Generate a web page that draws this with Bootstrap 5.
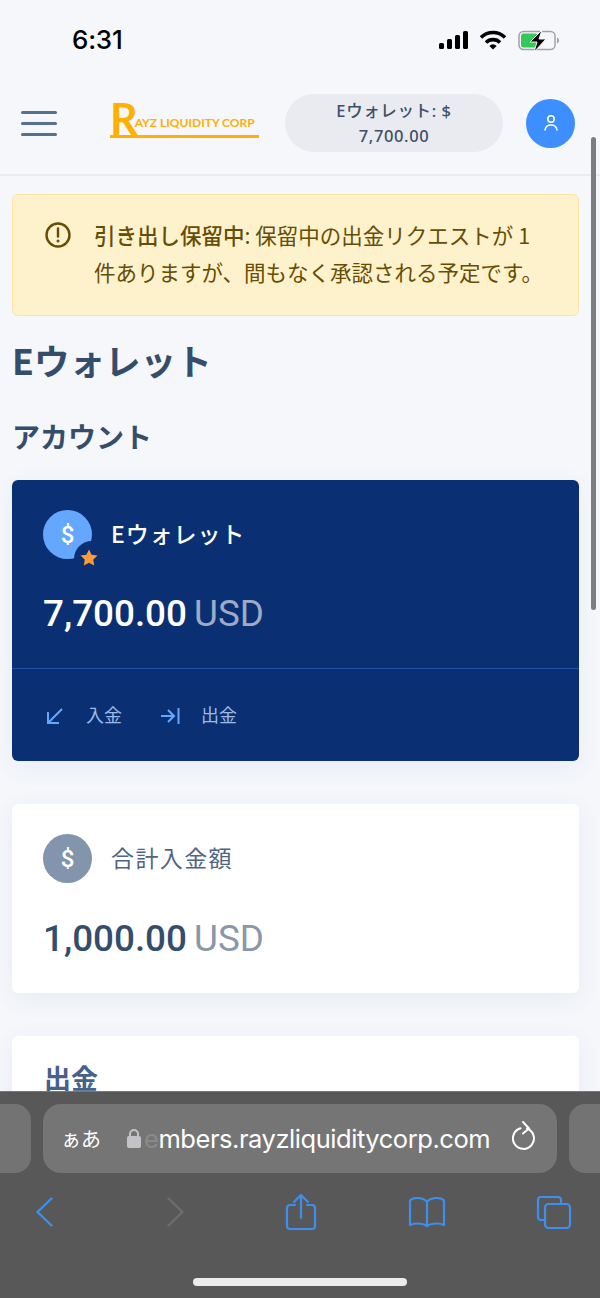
<!DOCTYPE html>
<html lang="ja">
<head>
  <meta charset="UTF-8">
  <meta name="viewport" content="width=device-width, initial-scale=1.0">
  <title>Eウォレット</title>
  <link href="https://cdn.jsdelivr.net/npm/bootstrap@5.3.0/dist/css/bootstrap.min.css" rel="stylesheet">
  <style>
    html, body { height: 100%; }
    body { background: #f5f7fb; color: #344d6b; font-family: Roboto, "Noto Sans CJK JP", sans-serif; overflow: hidden; }
    .phone { position: relative; width: 600px; height: 1298px; overflow: hidden; }

    /* status bar */
    .status-bar { height: 80px; padding: 25px 40px 0 72px; }
    .status-time { font: 500 26px/30px Inter, Roboto, sans-serif; color: #000; letter-spacing: -.2px; }
    .status-icons { padding-top: 5px; gap: 12px; }

    /* top nav */
    .top-nav { height: 96px; border-bottom: 2px solid #e9ebf1; padding: 0 25px 8px 21px; }
    .menu-btn { width: 36px; display: flex; flex-direction: column; gap: 8px; }
    .menu-btn span { display: block; height: 3px; background: #56708f; border-radius: 2px; }
    .logo { width: 149px; margin-left: 53px; margin-top: -6px; border-bottom: 3px solid #ffb000; color: #ffb000; height: 35px; white-space: nowrap; font-family: Lato, sans-serif; line-height: 1; }
    .logo-r { font-size: 43px; font-weight: 700; line-height: 31px; letter-spacing: -3px; height: 32px; }
    .logo-rest { font-size: 12px; font-weight: 700; letter-spacing: 0; line-height: 19px; padding-bottom: 3px; }
    .wallet-pill { width: 218px; height: 58px; margin-left: 26px; margin-top: -1px; background: #e9ebf0; border-radius: 29px; text-align: center; font: 500 16.5px/25px "Noto Sans", "Noto Sans CJK JP", sans-serif; letter-spacing: .6px; color: #3d5068; padding-top: 4px; }
    .avatar { width: 49px; height: 49px; margin-left: auto; background: #3d8fff; border-radius: 50%; }

    .page-body { padding: 18px 21px 0 12px; }
    .hold-alert { background: #fef2cd; border: 1px solid #fde5a1; border-radius: 6px; color: #664d03; height: 122px; margin: 0; padding: 21px 30px 0 32px; font: 400 21.5px/37px "Noto Sans CJK JP", sans-serif; }
    .hold-alert svg { flex: none; margin: 6px 23px 0 0; }
    .hold-alert b { font-weight: 500; }
    .page-title { font: 700 35.6px/44px "Noto Sans CJK JP", sans-serif; color: #344d6b; margin: 22px 0 0 0; }
    .sec-title { font: 700 28px/38px "Noto Sans CJK JP", sans-serif; color: #344d6b; margin: 35px 0 25px 0; }

    .acct-card { border: 0; border-radius: 6px; box-shadow: 0 6px 24px rgba(60, 80, 120, .07); margin-bottom: 43px; }
    .acct-primary { background: #0a3073; color: #fff; height: 281px; }
    .acct-plain { background: #fff; height: 189px; }
    .acct-last { background: #fff; height: 200px; }
    .acct-head { padding: 29px 31px 0; gap: 19px; height: 80px; }
    .coin { position: relative; width: 49px; height: 49px; border-radius: 50%; background: #65a6ff; flex: none; display: flex; align-items: center; justify-content: center; color: #fff; font: 500 24px/1 Roboto, sans-serif; }
    .coin-grey { background: #8295ad; }
    .coin-star { position: absolute; right: -18px; bottom: -18px; width: 36px; height: 36px; border-radius: 50%; background: #0a3073; display: flex; align-items: center; justify-content: center; padding: 0 6px 4px 0; }
    .acct-name { font: 500 23px/30px "Noto Sans CJK JP", sans-serif; letter-spacing: .9px; margin-top: -3px; }
    .acct-plain .acct-name { color: #4f6586; font-weight: 400; letter-spacing: 1.4px; }
    .acct-amount { padding: 31px 31px 0; font: 500 36.8px/46px Roboto, sans-serif; white-space: nowrap; }
    .acct-amount span { font-weight: 400; color: #9dabc4; margin-left: -2px; }
    .acct-plain .acct-amount { color: #344d6b; padding-top: 32px; }
    .acct-plain .acct-amount span { color: #8a97aa; }
    .acct-foot { margin-top: 31px; border-top: 1px solid #1a52a8; padding: 32px 33px 0; gap: 38px; color: #9dbbe6; font: 400 18px/26px "Noto Sans CJK JP", sans-serif; }
    .acct-foot svg { margin-right: 21px; vertical-align: -4px; }
    .acct-last h5 { font: 700 27px/38px "Noto Sans CJK JP", sans-serif; color: #46618a; margin: 0; padding: 23px 32px 0; }

    /* overlay scroll thumb */
    .scroll-thumb { position: absolute; left: 591px; top: 137px; width: 5px; height: 473px; background: #7d7d80; border-radius: 3px; }

    /* safari toolbar sits over the page */
    .safari-bar { position: absolute; left: 0; right: 0; top: 1091px; height: 207px; background: #585858; border-top: 1px solid #777; }
    .tab-row { padding-top: 12px; gap: 12px; margin-left: -43px; width: 686px; }
    .tab-side { width: 74px; height: 69px; background: #737373; border-radius: 16px; flex: none; }
    .url-box { width: 514px; height: 69px; background: #757575; border-radius: 18px; color: #fff; padding: 0 21px 0 18px; flex: none; font: 400 25.5px/69px Inter, Roboto, sans-serif; white-space: nowrap; }
    .url-aa { font: 400 20px/69px "Noto Sans CJK JP", sans-serif; width: 65px; }
    .url-text { margin-left: 2px; letter-spacing: -.45px; flex: 1; }
    .url-fade { color: rgba(255, 255, 255, .18); }
    .tool-row { padding: 20px 0 0 36px; align-items: center; height: 58px; }
    .tool-fwd { margin-left: 114px; }
    .tool-share { margin-left: 101px; }
    .tool-book { margin-left: 91px; }
    .tool-tabs { margin-left: 90px; }
    .home-bar { position: absolute; left: 193px; bottom: 12px; width: 214px; height: 8px; background: #ececec; border-radius: 4px; }
  </style>
</head>
<body>
<div class="phone">

  <div class="status-bar d-flex justify-content-between">
    <div class="status-time">6:31</div>
    <div class="status-icons d-flex align-items-start">
      <svg width="29" height="20" viewBox="3 0 29 20"><rect x="3" y="13" width="5" height="6" rx="1.5"/><rect x="11" y="9" width="5" height="10" rx="1.5"/><rect x="19" y="5" width="5" height="14" rx="1.5"/><rect x="27" y="1" width="5" height="18" rx="1.5"/></svg>
      <svg width="26" height="20" viewBox="1 0 26 20" fill="none" stroke="#000" stroke-width="3.6"><path d="M2 7.5a17 17 0 0 1 24 0"/><path d="M7 12.5a10 10 0 0 1 14 0"/><path d="M14 19.5l-3.6-3.6a5 5 0 0 1 7.2 0z" fill="#000" stroke="none"/></svg>
      <svg width="42" height="22" viewBox="0 0 42 22"><rect x="1" y="1.500" width="36" height="18" rx="4.500" fill="none" stroke="#a2a2a2" stroke-width="1.500"/><rect x="3" y="3.500" width="17" height="14" rx="2.500" fill="#34c759"/><path d="M39 7.500c1.500.5 2 1.700 2 3s-.5 2.500-2 3z" fill="#a2a2a2"/><path d="M24 0L12 12h7l-3 10 12-13h-7z" fill="#000" stroke="#f5f7fb" stroke-width="1"/></svg>
    </div>
  </div>

  <nav class="top-nav d-flex align-items-center">
    <div class="menu-btn"><span></span><span></span><span></span></div>
    <div class="logo d-flex align-items-end"><span class="logo-r">R</span><span class="logo-rest">AYZ LIQUIDITY CORP</span></div>
    <div class="wallet-pill">Eウォレット: $<br>7,700.00</div>
    <div class="avatar d-flex align-items-center justify-content-center">
      <svg width="16" height="18" viewBox="0 0 16 18" fill="none" stroke="#fff" stroke-width="1.500" stroke-linecap="round"><circle cx="8" cy="5" r="3.200"/><path d="M2 16c.5-3.500 2.800-5 6-5s5.500 1.500 6 5"/></svg>
    </div>
  </nav>

  <div class="page-body">
    <div class="alert hold-alert d-flex" role="alert">
      <svg width="26" height="26" viewBox="0 0 26 26" fill="none" stroke="#664d03" stroke-width="2.400"><circle cx="13" cy="13" r="11.500"/><path d="M13 6.500v8" stroke-linecap="round"/><circle cx="13" cy="19" r=".9" fill="#664d03" stroke-width="1.200"/></svg>
      <div><b>引き出し保留中</b>: 保留中の出金リクエストが 1 件ありますが、間もなく承認される予定です。</div>
    </div>

    <h1 class="page-title">Eウォレット</h1>
    <h2 class="sec-title">アカウント</h2>

    <div class="card acct-card acct-primary">
      <div class="acct-head d-flex align-items-center">
        <div class="coin">$
          <div class="coin-star">
            <svg width="18" height="17" viewBox="0 0 18 17"><path d="M9 .5l2.600 5.300 5.900.8-4.300 4.100 1 5.800L9 13.800l-5.200 2.700 1-5.800L.5 6.600l5.900-.8z" fill="#ff9a3d"/></svg>
          </div>
        </div>
        <div class="acct-name">Eウォレット</div>
      </div>
      <div class="acct-amount">7,700.00 <span>USD</span></div>
      <div class="acct-foot d-flex">
        <div><svg width="20" height="20" viewBox="0 0 20 20" fill="none" stroke="#65a6ff" stroke-width="2"><path d="M17 3L3 17M3 6v11h11"/></svg>入金</div>
        <div><svg width="20" height="20" viewBox="0 0 20 20" fill="none" stroke="#65a6ff" stroke-width="2"><path d="M1 10h12M8 4l6 6-6 6"/><path d="M18.500 2v16"/></svg>出金</div>
      </div>
    </div>

    <div class="card acct-card acct-plain">
      <div class="acct-head d-flex align-items-center">
        <div class="coin coin-grey">$</div>
        <div class="acct-name">合計入金額</div>
      </div>
      <div class="acct-amount">1,000.00 <span>USD</span></div>
    </div>

    <div class="card acct-card acct-last">
      <h5>出金</h5>
    </div>
  </div>

  <div class="scroll-thumb"></div>

  <div class="safari-bar">
    <div class="tab-row d-flex">
      <div class="tab-side"></div>
      <div class="url-box d-flex">
        <div class="url-aa">ぁあ</div>
        <svg class="mt-4" width="16" height="20" viewBox="0 0 16 20" style="flex:none"><path d="M4 9V6a4 4 0 0 1 8 0v3" fill="none" stroke="#c4c4c8" stroke-width="2"/><rect x="1" y="8" width="14" height="12" rx="2" fill="#c4c4c8"/></svg>
        <div class="url-text"><span class="url-fade">e</span>mbers.rayzliquiditycorp.com</div>
        <svg class="mt-3" width="24" height="32" viewBox="0 0 24 32" style="flex:none" fill="none" stroke="#fff" stroke-width="2" stroke-linecap="round"><path d="M15 8.500a10.500 10.500 0 1 1-6.500-.2"/><path d="M11 2l6 6.500-6 5"/></svg>
      </div>
      <div class="tab-side"></div>
    </div>
    <div class="tool-row d-flex">
      <svg width="17" height="30" viewBox="0 0 17 30" fill="none" stroke="#3d8fef" stroke-width="2.400" stroke-linecap="round" stroke-linejoin="round"><path d="M15.500 1.500L1.500 15l14 13.500"/></svg>
      <svg class="tool-fwd" width="17" height="30" viewBox="0 0 17 30" fill="none" stroke="#6e6e6e" stroke-width="2.400" stroke-linecap="round" stroke-linejoin="round"><path d="M1.500 1.500L15.500 15l-14 13.500"/></svg>
      <svg class="tool-share" width="32" height="38" viewBox="0 0 32 38" fill="none" stroke="#3d8fef" stroke-width="2.200" stroke-linecap="round" stroke-linejoin="round"><path d="M10 12H5a3 3 0 0 0-3 3v18a3 3 0 0 0 3 3h22a3 3 0 0 0 3-3V15a3 3 0 0 0-3-3h-5"/><path d="M16 25V2M9 9l7-7 7 7"/></svg>
      <svg class="tool-book" width="38" height="32" viewBox="0 0 38 32" fill="none" stroke="#3d8fef" stroke-width="2.200" stroke-linejoin="round"><path d="M19 6c-2-3-6-4-10-4-3 0-5 .5-6.500 2-.5.5-.5 1-.5 2v23c2-1 4-1.500 7-1.500 4 0 8 1 10 2.500 2-1.500 6-2.500 10-2.500 3 0 5 .5 7 1.500V6c0-1 0-1.500-.5-2C34 2.500 32 2 29 2c-4 0-8 1-10 4zM19 6v24"/></svg>
      <svg class="tool-tabs" width="36" height="34" viewBox="0 0 36 34" fill="none" stroke="#3d8fef" stroke-width="2.200"><path d="M8 25H5a3 3 0 0 1-3-3V5a3 3 0 0 1 3-3h17a3 3 0 0 1 3 3v3"/><rect x="9" y="9" width="25" height="24" rx="3.500"/></svg>
    </div>
    <div class="home-bar"></div>
  </div>
</div>
<script src="https://cdn.jsdelivr.net/npm/bootstrap@5.3.0/dist/js/bootstrap.bundle.min.js"></script>
</body>
</html>
